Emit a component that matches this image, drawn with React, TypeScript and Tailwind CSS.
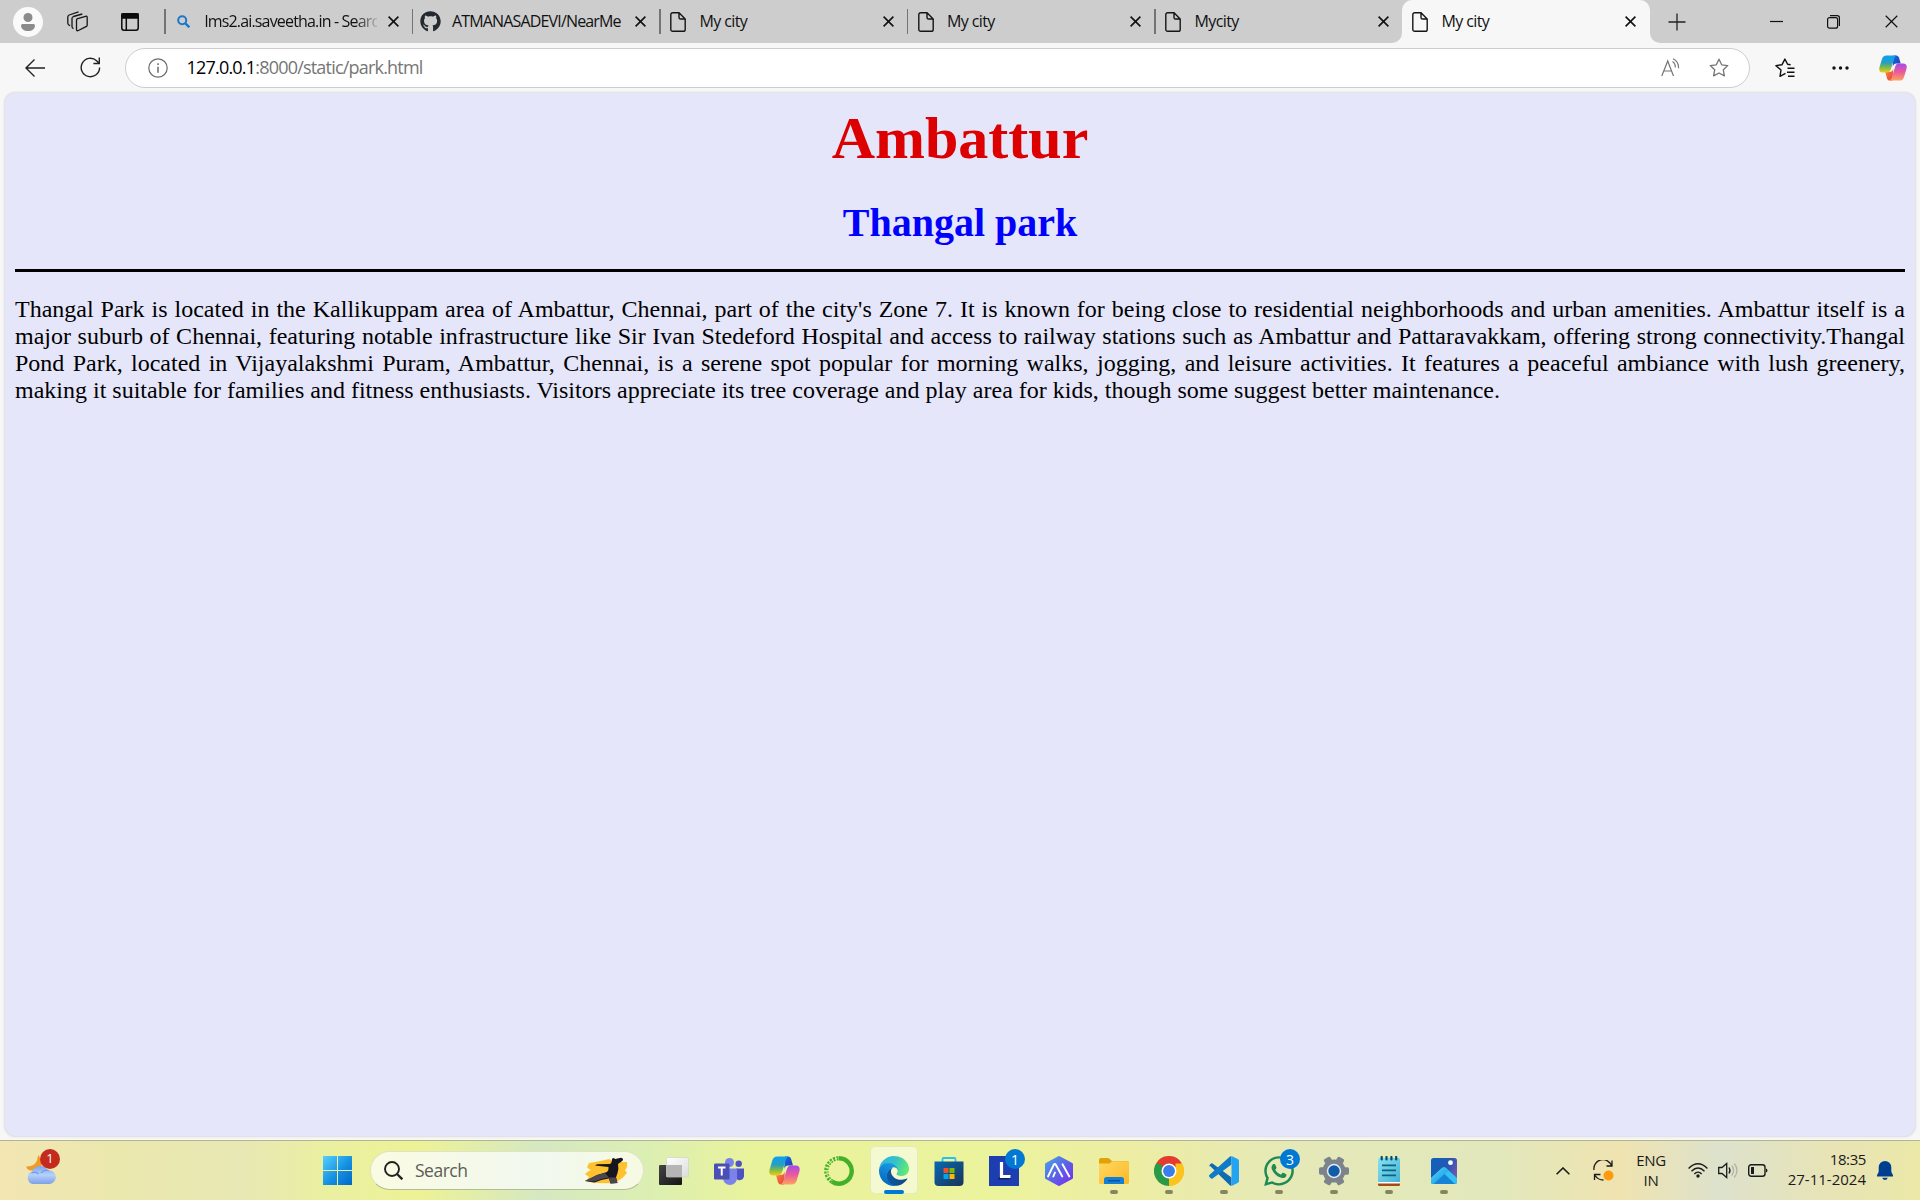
import React from 'react';
import { FaGithub, FaWhatsapp } from 'react-icons/fa';

const Close = ({ s = 11, w = 1.6 }: { s?: number; w?: number }) => (
  <svg width={s} height={s} viewBox="0 0 11 11" stroke="#111" strokeWidth={w} fill="none">
    <path d="M.6.6l9.8 9.8M10.4.6L.6 10.4" />
  </svg>
);

const Doc = () => (
  <svg width="16" height="20" viewBox="0 0 16 20" fill="none" stroke="#151515" strokeWidth="1.4">
    <path d="M2.7.8h6.3l6.2 6.2v10.4a1.9 1.9 0 0 1-1.9 1.9H2.7A1.9 1.9 0 0 1 .8 17.400V2.700A1.900 1.900 0 0 1 2.700.8zM9 .8v4.600a1.600 1.600 0 0 0 1.600 1.600h4.600" />
  </svg>
);

const Lens = () => (
  <svg width="13" height="13" viewBox="0 0 13 13" fill="none" stroke="#1a78cc" strokeWidth="2">
    <circle cx="5.200" cy="5.200" r="4" />
    <path d="M8 8l4.300 4.300" strokeWidth="2.400" />
  </svg>
);

function Copilot({ size }: { size: number }) {
  return (
    <svg width={size} height={size} viewBox="0 0 30 30">
      <defs>
        <linearGradient id="cpA" x1="0" y1="0" x2="0" y2="1">
          <stop offset="0.1" stopColor="#0fa0ea" />
          <stop offset="0.45" stopColor="#2a9fc0" />
          <stop offset="0.7" stopColor="#7cba4a" />
          <stop offset="1" stopColor="#f4cc13" />
        </linearGradient>
        <linearGradient id="cpB" x1="0" y1="0" x2="0" y2="1">
          <stop offset="0" stopColor="#a54bea" />
          <stop offset="0.5" stopColor="#ec5a9a" />
          <stop offset="1" stopColor="#fba45c" />
        </linearGradient>
        <linearGradient id="cpC" x1="0" y1="0" x2="1" y2="1">
          <stop offset="0" stopColor="#1d68dd" />
          <stop offset="1" stopColor="#1540b8" />
        </linearGradient>
        <linearGradient id="cpD" x1="0" y1="0" x2="1" y2="1">
          <stop offset="0" stopColor="#fb8a3c" />
          <stop offset="1" stopColor="#e6403e" />
        </linearGradient>
      </defs>
      <path d="M15.500 1.500h2.800c1.800 0 2.700 1 3.200 2.600l1.700 6.100h-4.600c-2.500 0-3.200 1.400-3.900 3.400z" fill="url(#cpC)" />
      <path d="M14.500 28.500h-2.800c-1.800 0-2.700-1-3.200-2.600l-1.700-6.600h4.600c2.500 0 3.200-1.400 3.900-3.400z" fill="url(#cpD)" />
      <path d="M8.200 1.500h11c-1.800.5-2.500 1.800-3.100 3.800L12.800 16c-.8 2.600-1.900 3.800-4.100 3.800H4.200C.6 19.800-.3 17.400.6 14L3.200 5.400C4 2.800 5.400 1.500 8.200 1.500z" fill="url(#cpA)" />
      <path d="M21.800 28.500h-11c1.800-.5 2.500-1.800 3.100-3.800L17.200 14c.8-2.600 1.900-3.800 4.100-3.800h4.500c3.600 0 4.500 2.400 3.600 5.800l-2.600 8.600c-.8 2.600-2.200 3.900-5 3.900z" fill="url(#cpB)" />
    </svg>
  );
}

const Edge = () => (
  <svg width="30" height="30" viewBox="0 0 256 256">
    <defs>
      <linearGradient id="edA" x1="0.2" y1="0" x2="1" y2="0.3">
        <stop offset="0" stopColor="#0c59a4" />
        <stop offset="1" stopColor="#114a8b" />
      </linearGradient>
      <linearGradient id="edB" x1="0.6" y1="0" x2="0.3" y2="1">
        <stop offset="0" stopColor="#1b9de2" />
        <stop offset="0.5" stopColor="#0f7fd2" />
        <stop offset="1" stopColor="#0067c0" />
      </linearGradient>
      <linearGradient id="edC" x1="0" y1="0.3" x2="1" y2="0.6">
        <stop offset="0" stopColor="#2fb4e8" />
        <stop offset="0.5" stopColor="#36c3c4" />
        <stop offset="1" stopColor="#66eb6e" />
      </linearGradient>
    </defs>
    <path fill="url(#edA)" d="M235.680 191.870c-3.360 1.870-6.860 3.470-10.460 4.790a101.100 101.100 0 0 1-35.530 6.330c-46.820 0-87.620-32.180-87.620-73.550.12-11.260 6.340-21.570 16.210-26.980-42.360 1.780-53.260 45.920-53.260 71.780 0 73.110 67.390 80.520 81.930 80.520 7.830 0 19.670-2.280 26.750-4.550l1.300-.42a128.100 128.100 0 0 0 66.550-52.650 4.050 4.050 0 0 0-5.870-5.270z" />
    <path fill="url(#edB)" d="M105.730 241.420a79.200 79.200 0 0 1-22.740-21.340 80.720 80.720 0 0 1 29.540-120.490c3.120-1.470 8.450-4.120 15.540-3.990a32.350 32.350 0 0 1 25.690 13.010 31.880 31.880 0 0 1 6.360 18.660c0-.21 24.460-79.580-80-79.580-43.900 0-80 41.660-80 78.210a130.150 130.150 0 0 0 12.110 56 128 128 0 0 0 156.380 67.110 75.550 75.550 0 0 1-62.780-8z" />
    <path fill="url(#edC)" d="M152.330 148.860c-.81 1.050-3.300 2.500-3.300 5.660 0 2.610 1.700 5.120 4.720 7.230 14.380 10 41.490 8.680 41.560 8.680a59.560 59.560 0 0 0 30.270-8.350 61.380 61.380 0 0 0 30.430-52.880c.26-22.410-8-37.310-11.340-43.910C223.460 23.840 177.720 0 128 0A128 128 0 0 0 0 126.200c.48-36.540 36.800-66.050 80-66.050 3.500 0 23.460.34 42 10.070 16.340 8.580 24.900 18.940 30.850 29.210 6.180 10.670 7.280 24.150 7.280 29.520s-2.740 13.330-7.800 19.910z" />
  </svg>
);

const TaskView = () => (
  <svg width="30" height="30" viewBox="0 0 30 30">
    <defs>
      <linearGradient id="tvA" x1="0" y1="0" x2="1" y2="1">
        <stop offset="0" stopColor="#444" />
        <stop offset="1" stopColor="#151515" />
      </linearGradient>
      <linearGradient id="tvB" x1="0" y1="0" x2="1" y2="1">
        <stop offset="0" stopColor="#fff" />
        <stop offset="1" stopColor="#dcdcdc" />
      </linearGradient>
    </defs>
    <rect x="0" y="9" width="23" height="20" rx="1" fill="url(#tvA)" />
    <rect x="7.500" y="1.500" width="22" height="19.500" rx="1" fill="url(#tvB)" stroke="#d0d4c4" strokeWidth=".7" />
    <path d="M7.500 9H23v12H7.500z" fill="#b5b5b5" />
  </svg>
);

const Teams = () => (
  <svg width="30" height="28" viewBox="0 0 30 28">
    <circle cx="24.700" cy="6.700" r="3.200" fill="#4f52c2" />
    <path d="M22 11.500h8v8a4.500 4.500 0 0 1-8 2z" fill="#4f52c2" />
    <circle cx="15.500" cy="5.500" r="4.500" fill="#7b83eb" />
    <path d="M9 11.500h14v9.500a7 7 0 0 1-14 0z" fill="#7b83eb" />
    <rect x="0" y="6.500" width="15.500" height="16" rx="1.200" fill="#4a4fb8" />
    <path d="M4 10.500h7.500M7.750 10.500v8" stroke="#fff" strokeWidth="2" />
  </svg>
);

const Ring = () => (
  <svg width="30" height="30" viewBox="0 0 30 30" fill="none">
    <path d="M15 2.300A12.700 12.700 0 1 1 8 25.600" stroke="#43b02a" strokeWidth="4.400" />
    <path d="M8 25.600A12.700 12.700 0 0 1 15 2.300" stroke="#43b02a" strokeWidth="4.200" strokeDasharray="2.100 1.200" />
    <path d="M7.500 24.500A12.400 12.400 0 0 1 14 2.500" stroke="#e9f29c" strokeWidth="1" strokeDasharray="2.500 1.800" />
  </svg>
);

const Store = () => (
  <svg width="30" height="30" viewBox="0 0 30 30">
    <defs>
      <linearGradient id="stA" x1="0" y1="0" x2="1" y2="1">
        <stop offset="0" stopColor="#0669b4" />
        <stop offset="1" stopColor="#1c3357" />
      </linearGradient>
    </defs>
    <path d="M8.500 7V3.200Q8.500 2 9.700 2h10.600q1.200 0 1.200 1.200V7" fill="none" stroke="#26c1f2" strokeWidth="1.800" />
    <path d="M.5 5.500h29V26a4 4 0 0 1-4 4h-21a4 4 0 0 1-4-4z" fill="url(#stA)" />
    <path d="M9.500 12h5v5h-5z" fill="#f25022" />
    <path d="M15.500 12h5v5h-5z" fill="#7fba00" />
    <path d="M9.500 18h5v5h-5z" fill="#00a4ef" />
    <path d="M15.500 18h5v5h-5z" fill="#ffb900" />
  </svg>
);

const LApp = () => (
  <svg width="30" height="30" viewBox="0 0 30 30">
    <path d="M0 0h30v30H0z" fill="#1d3eb0" />
    <path d="M8.500 23.500l3-3.500h10.500v2.500l-3 1z" fill="#0d2260" />
    <path d="M12.500 6v14.500h9" fill="none" stroke="#fff" strokeWidth="3.200" />
  </svg>
);

const Peaks = () => (
  <svg width="30" height="30" viewBox="0 0 30 30" fill="none">
    <defs>
      <linearGradient id="pkA" x1="0" y1="0" x2="1" y2="1">
        <stop offset="0" stopColor="#4aa3e6" />
        <stop offset="0.5" stopColor="#5b63e6" />
        <stop offset="1" stopColor="#7a2ff0" />
      </linearGradient>
    </defs>
    <path d="M15 1.500L27.500 8.300v13.400L15 28.500 2.500 21.700V8.300z" fill="url(#pkA)" stroke="url(#pkA)" strokeWidth="3" strokeLinejoin="round" />
    <path d="M4 20.500L9.600 9q1.200-2 2.400 0l6.300 11.500M11 16.500l-1.700 4M18.500 8.300l6.800 12.200" stroke="#fff" strokeWidth="1.900" strokeLinecap="round" />
  </svg>
);

const Folder = () => (
  <svg width="30" height="26" viewBox="0 0 30 26">
    <defs>
      <linearGradient id="foA" x1="0" y1="0" x2="1" y2="1">
        <stop offset="0" stopColor="#ffd860" />
        <stop offset="1" stopColor="#fbb928" />
      </linearGradient>
    </defs>
    <path d="M0 2Q0 0 2 0h7.500l3.500 3h15q2 0 2 2v5H0z" fill="#e2a106" />
    <path d="M0 5.500h10.500l2.500-2.300h15.500q1.500 0 1.500 1.500v19.800q0 1.500-1.500 1.500h-27Q0 26 0 24.500z" fill="url(#foA)" />
    <path d="M5 26v-4.500q0-2.500 2.500-2.500h15q2.500 0 2.500 2.500V26z" fill="#1180d4" />
    <path d="M9 22.700h12" stroke="#0a4f94" strokeWidth="1.300" />
  </svg>
);

const Chrome = () => (
  <svg width="30" height="30" viewBox="0 0 48 48">
    <path d="M24 24L3.200 12A24 24 0 0 1 44.800 12z" fill="#e33b2e" />
    <path d="M24 24L44.800 12A24 24 0 0 1 24 48z" fill="#fcc31e" />
    <path d="M24 24v24A24 24 0 0 1 3.200 12z" fill="#2a9a47" />
    <path d="M13.600 30L3.200 12l9 2 4 10z" fill="#2a9a47" />
    <path d="M34.400 18V12h10.400A24 24 0 0 1 24 48l10.400-18z" fill="#fcc31e" />
    <circle cx="24" cy="24" r="12" fill="#fff" />
    <circle cx="24" cy="24" r="9.500" fill="#3b7eea" />
  </svg>
);

const Code = () => (
  <svg width="30" height="30" viewBox="0 0 100 100">
    <path d="M1 31l6-6q2-2 5 0l63 47v25q-2 2-4 2z M1 37q-2-3 0-6z" fill="#0f6cb2" />
    <path d="M1 69l6 6q2 2 5 0l63-47V3q-2-2-4-2L1 63q-2 3 0 6z" fill="#0e7ac9" />
    <path d="M71 99q4 1 6 0l20-10q3-2 3-6V17q0-4-3-6L77 1q-3-1-6 0 4 0 4 4v90q0 4-4 4z" fill="#24a4f0" />
  </svg>
);

const Gear = () => (
  <svg width="30" height="30" viewBox="0 0 30 30">
    <g fill="#7d838b">
      <circle cx="15" cy="15" r="11.500" />
      {[0, 60, 120].map((a) => (
        <rect key={a} x="0" y="11.300" width="30" height="7.400" rx="1.600" transform={`rotate(${a} 15 15)`} />
      ))}
    </g>
    <circle cx="15" cy="15" r="7.200" fill="#e8ecf0" />
    <circle cx="15" cy="15" r="5.700" fill="#0f5ca8" />
  </svg>
);

const Notes = () => (
  <svg width="22" height="30" viewBox="0 0 22 30">
    <defs>
      <linearGradient id="noA" x1="0" y1="0" x2="1" y2="1">
        <stop offset="0" stopColor="#86e2f2" />
        <stop offset="1" stopColor="#44b2d4" />
      </linearGradient>
    </defs>
    <path d="M0 25h22v3.500q0 1.500-1.500 1.500h-19Q0 30 0 28.500z" fill="#a44a12" />
    <path d="M0 24h22v3.500H0z" fill="#fff" />
    <path d="M0 3.500Q0 2 1.500 2h19Q22 2 22 3.500V26H0z" fill="url(#noA)" />
    <path d="M4 9.300h14M4 14.300h14M4 19.300h14" stroke="#0b6482" strokeWidth="1.700" />
    <path d="M3.700 1v2.500M8.500 1v2.500M13.400 1v2.500M18.200 1v2.500" stroke="#0b4a66" strokeWidth="2.200" strokeLinecap="round" />
  </svg>
);

const Photos = () => (
  <svg width="26" height="26" viewBox="0 0 26 26">
    <defs>
      <linearGradient id="phA" x1="0" y1="0.300" x2="1" y2="0.700">
        <stop offset="0" stopColor="#0d62bd" />
        <stop offset="0.600" stopColor="#2b56b0" />
        <stop offset="1" stopColor="#7b55b5" />
      </linearGradient>
      <linearGradient id="phB" x1="0" y1="0" x2="1" y2="1">
        <stop offset="0" stopColor="#4fdcf8" />
        <stop offset="1" stopColor="#128be0" />
      </linearGradient>
    </defs>
    <rect width="26" height="26" rx="2.500" fill="url(#phA)" />
    <path d="M0 20L11 10q2-1.500 4 0l11 10v3.500q0 2.500-2.500 2.500h-21Q0 26 0 23.500z" fill="#33c1f1" />
    <path d="M2 26l11-10.500L24 26z" fill="#1583d8" />
    <path d="M0 20L11 10q2-1.500 4 0l2.500 2.500L2.500 26Q0 26 0 23.500z" fill="url(#phB)" />
    <circle cx="19.500" cy="4.700" r="2.400" fill="#fff" />
  </svg>
);

const Weather = () => (
  <svg width="30" height="29" viewBox="0 0 30 29">
    <defs>
      <linearGradient id="weA" x1="0" y1="0" x2="0" y2="1">
        <stop offset="0" stopColor="#7ea4ee" />
        <stop offset="0.500" stopColor="#b4d2fb" />
        <stop offset="1" stopColor="#7d9fe6" />
      </linearGradient>
    </defs>
    <path d="M12 0c2 2 4 6 4 10l-6 5.500H4C2 14.500.5 13.500 0 11.500c7 .5 11.500-3 12-11.500z" fill="#f29a25" />
    <path d="M7 29a6.500 6.500 0 0 1-1-12.500A9 9 0 0 1 22 15.500a6.800 6.800 0 0 1 2 13.500z" fill="url(#weA)" />
    <path d="M5.500 18q4-2 7 1M15 18q3-4 8-2.500" fill="none" stroke="#7799e6" strokeWidth="1.200" />
  </svg>
);

const Dancer = () => (
  <svg width="44" height="28" viewBox="0 0 44 28">
    <path d="M5 6Q18 4 25 2l5 3 13 0q1 5-2 8l2 3q-4 5-9 8l-8 2Q10 27 2 24l3-4-4-3q3-3 6-4-3-1-4-3z" fill="#ffc22e" />
    <path d="M28 2q1.500-1.800 3 0l6-1.200q3 .7 1.500 3l-4.500 3.200q1 5-.5 9l-1.500 4.500 1.500 5.500-7 .6q-1-3-1.500-5-8 1-14.500 4L1 24q6-3 12-6l10-3q2-2 1.500-5L11 8.500l2-1.200 13-.3q2-1 2-5z" fill="#17151f" />
    <path d="M25 20.500q-8 1-14.500 4L1 24q6-3 12-6l8-2M25 20.500l7 0 1.500 5.500-7 .6z" fill="#4b4552" />
  </svg>
);

const Windows = () => (
  <svg width="29" height="29" viewBox="0 0 29 29">
    <defs>
      <linearGradient id="wiA" x1="0" y1="0" x2="29" y2="29" gradientUnits="userSpaceOnUse">
        <stop offset="0" stopColor="#57d0fc" />
        <stop offset="0.550" stopColor="#1590e2" />
        <stop offset="1" stopColor="#0068c8" />
      </linearGradient>
    </defs>
    <path d="M0 0h14v14H0zM15 0h14v14H15zM0 15h14v14H0zM15 15h14v14H15z" fill="url(#wiA)" />
  </svg>
);

type TabProps = { title: string; icon: React.ReactNode; active?: boolean; look?: string };

function Tab({ title, icon, active, look }: TabProps) {
  return (
    <div className="flex h-[43px] w-[247.5px] shrink-0 items-center">
      {!active && <div className="h-[25px] w-[1.5px] shrink-0 bg-[#747474]" />}
      <div className={active ? 'flex w-[36px] shrink-0 justify-center' : 'flex w-[35px] shrink-0 justify-center'}>{icon}</div>
      <div className={`mb-[2px] ml-[4px] w-[172px] overflow-hidden whitespace-nowrap text-[16px] text-[#111] ${look ?? 'tracking-[-0.6px]'}`}>{title}</div>
      <div className="ml-[11px] flex shrink-0">
        <Close />
      </div>
    </div>
  );
}

type AppProps = { children: React.ReactNode; running?: boolean; current?: boolean; badge?: string };

function TaskApp({ children, running, current, badge }: AppProps) {
  return (
    <div className="relative flex h-[59px] w-[55px] shrink-0 items-center justify-center">
      {current && <div className="absolute left-[3.500px] top-[5px] h-[48px] w-[48px] rounded-[5px] border border-[#e6ebbf] bg-[#f5f9d0]" />}
      <div className="relative">{children}</div>
      {running && <div className="absolute left-[23.500px] top-[49px] h-[4px] w-[8px] rounded-full bg-[#85865f]" />}
      {current && <div className="absolute left-[17.500px] top-[49px] h-[4px] w-[20px] rounded-full bg-[#0078d4]" />}
      {badge && (
        <div className="absolute left-[28.500px] top-[8px] flex h-[20px] w-[20px] items-center justify-center rounded-full bg-[#0078d4] text-[14px] text-white">
          {badge}
        </div>
      )}
    </div>
  );
}

const star = 'M10 1.200l2.700 5.600 6.100.8-4.500 4.200 1.100 6.100L10 15l-5.400 2.900 1.100-6.100L1.200 7.600l6.100-.8z';

export default function App() {
  return (
    <div className="flex h-[1200px] w-[1920px] flex-col overflow-hidden bg-[#f7f7f7] font-['Open_Sans',sans-serif]">
      <div className="flex h-[43px] shrink-0 bg-[#cdcdcd]">
        <div className="flex w-[164px] shrink-0 items-center">
          <div className="ml-[13px] flex h-[30px] w-[30px] items-center justify-center rounded-full bg-[#fafafa]">
            <svg width="14" height="18" viewBox="0 0 14 18" fill="#8b8b8b">
              <circle cx="7" cy="4.500" r="4.500" />
              <path d="M1.500 11h11q1.500 0 1.500 1.500C14 16 11 18 7 18s-7-2-7-5.500Q0 11 1.500 11z" />
            </svg>
          </div>
          <svg className="ml-[24px]" width="21" height="21" viewBox="0 0 21 21" fill="none" stroke="#151515" strokeWidth="1.300" strokeLinejoin="round">
            <path d="M9.500 9.200q0-1.200 1.200-1.600l7.800-2.300q1.700-.4 1.700 1.200v7.400q0 1.200-1.200 1.700l-7.600 3.900q-1.900.8-1.900-1z" />
            <path d="M6.500 17.500q-1.500-.3-1.500-2V7.500Q5 6 6.500 5.500L15.300 3M3.200 14.500Q1 14.300.8 12.300V6Q.8 4.500 2.200 4L11.500.9" />
          </svg>
          <svg className="ml-[33px]" width="18" height="18" viewBox="0 0 18 18" fill="none" stroke="#0b0b0b" strokeWidth="1.500">
            <rect x=".8" y=".8" width="16.400" height="16.400" rx="2.200" />
            <path d="M1 1h16v4H1z" fill="#0b0b0b" />
            <path d="M5.300 5v12" />
          </svg>
        </div>
        <Tab
          title="lms2.ai.saveetha.in - Searc"
          look="tracking-[-0.83px] [mask-image:linear-gradient(to_right,black_150px,transparent_176px)]"
          icon={<Lens />}
        />
        <Tab title="ATMANASADEVI/NearMe" look="tracking-[-0.84px]" icon={<FaGithub size={21} color="#24292f" />} />
        <Tab title="My city" icon={<Doc />} />
        <Tab title="My city" icon={<Doc />} />
        <Tab title="Mycity" icon={<Doc />} />
        <div className="-ml-[10px] flex shrink-0">
          <div className="h-[43px] w-[10px] bg-[#f7f7f7]">
            <div className="h-full w-full rounded-br-[10px] bg-[#cdcdcd]" />
          </div>
          <div className="w-[248px] rounded-t-[10px] bg-[#f7f7f7]">
            <Tab title="My city" active icon={<Doc />} />
          </div>
          <div className="h-[43px] w-[10px] bg-[#f7f7f7]">
            <div className="h-full w-full rounded-bl-[10px] bg-[#cdcdcd]" />
          </div>
        </div>
        <div className="flex flex-1 items-center">
          <svg className="ml-[8px]" width="18" height="18" viewBox="0 0 18 18" stroke="#222" strokeWidth="1.300">
            <path d="M9 .5v17M.5 9h17" />
          </svg>
          <svg className="ml-[84px]" width="13" height="13" viewBox="0 0 13 13" stroke="#111" strokeWidth="1.200">
            <path d="M0 6.500h13" />
          </svg>
          <svg className="ml-[44px]" width="13" height="14" viewBox="0 0 13 14" fill="none" stroke="#111" strokeWidth="1.200">
            <rect x=".6" y="2.600" width="10" height="10.600" rx="2" />
            <path d="M3 .7h7.200q2.200 0 2.200 2.200V11" />
          </svg>
          <div className="ml-[45px]">
            <Close s={13} w={1} />
          </div>
        </div>
      </div>

      <div className="flex h-[50px] shrink-0 items-center pb-[1px]">
        <svg className="ml-[25px]" width="20" height="18" viewBox="0 0 20 18" fill="none" stroke="#222" strokeWidth="1.400">
          <path d="M20 9H1M9.500.6L1 9l8.500 8.400" />
        </svg>
        <svg className="ml-[35px]" width="21" height="21" viewBox="0 0 21 21" fill="none" stroke="#222" strokeWidth="1.400">
          <path d="M19.600 10.500a9.200 9.200 0 1 1-3-6.800L19 6.200M19.300.5v6H13.400" />
        </svg>
        <div className="ml-[24px] flex h-[40px] w-[1625px] items-center rounded-full border border-[#cdcdcd] bg-white">
          <svg className="ml-[21.500px]" width="20" height="20" viewBox="0 0 20 20" fill="none" stroke="#6b6b6b" strokeWidth="1.200">
            <circle cx="10" cy="10" r="9.200" />
            <path d="M10 8.700v6M10 5.200v1.700" strokeWidth="1.500" />
          </svg>
          <div className="ml-[19px] text-[18px] tracking-[-0.8px] text-[#767676]">
            <span className="text-black">127.0.0.1</span>:8000/static/park.html
          </div>
          <svg className="ml-auto" width="19" height="19" viewBox="0 0 19 19" fill="none" stroke="#757575" strokeWidth="1.200">
            <path d="M.8 18L6.700 3l5.800 15M2.700 13h8M11.500 3.500q3 2 2.800 6M12 .8q5.800 2.700 5.600 9.500" />
          </svg>
          <svg className="ml-[29px] mr-[20px]" width="20" height="20" viewBox="0 0 20 20" fill="none" stroke="#757575" strokeWidth="1.300" strokeLinejoin="round">
            <path d={star} />
          </svg>
        </div>
        <svg className="ml-[25px]" width="20" height="20" viewBox="0 0 20 20" fill="none" stroke="#111" strokeWidth="1.400" strokeLinejoin="round">
          <path d="M10.500 15.300L5 18.300l1-6.300L.9 7.600l6-.8 3-5.700 2.700 5.200 3 .4M12.500 10.200h7M12 14.300h7.500M13 18.200h6.500" />
        </svg>
        <svg className="ml-[37px]" width="17" height="4" viewBox="0 0 17 4" fill="#111">
          <circle cx="2" cy="2" r="1.700" />
          <circle cx="8.500" cy="2" r="1.700" />
          <circle cx="15" cy="2" r="1.700" />
        </svg>
        <div className="ml-[30px]">
          <Copilot size={28} />
        </div>
      </div>

      <div className="ml-[5px] h-[1043px] w-[1910px] shrink-0 rounded-[11px] bg-[#e5e6fa] px-[10px] font-['Liberation_Serif',serif] text-black shadow-[0_0_2px_0.500px_#dcdcdc]">
        <h1 className="pt-[11px] text-center text-[60px] font-bold leading-[69px] text-[#dc0000]">Ambattur</h1>
        <h2 className="mt-[27px] text-center text-[40px] font-bold leading-[46px] text-[#0000ff]">Thangal park</h2>
        <hr className="mt-[23px] h-[3px] border-0 bg-black" />
        <div className="mt-[24px] whitespace-nowrap text-justify text-[24px] leading-[27px]">
          <div className="[text-align-last:justify]">Thangal Park is located in the Kallikuppam area of Ambattur, Chennai, part of the city's Zone 7. It is known for being close to residential neighborhoods and urban amenities. Ambattur itself is a</div>
          <div className="[text-align-last:justify]">major suburb of Chennai, featuring notable infrastructure like Sir Ivan Stedeford Hospital and access to railway stations such as Ambattur and Pattaravakkam, offering strong connectivity.Thangal</div>
          <div className="[text-align-last:justify]">Pond Park, located in Vijayalakshmi Puram, Ambattur, Chennai, is a serene spot popular for morning walks, jogging, and leisure activities. It features a peaceful ambiance with lush greenery,</div>
          <div>making it suitable for families and fitness enthusiasts. Visitors appreciate its tree coverage and play area for kids, though some suggest better maintenance.</div>
        </div>
      </div>

      <div className="mt-auto flex h-[60px] shrink-0 items-center border-t border-[#b2b594] bg-[linear-gradient(90deg,#f3e6b4_0px,#ebe8ad_110px,#e8e8b4_240px,#eaf0a0_330px,#edf296_420px,#d5e8c2_540px,#dcefb2_650px,#e9f39c_750px,#ebf39c_1000px,#ededa4_1130px,#e5e9b8_1300px,#e2e8bc_1500px,#efe3b0_1620px,#dde2cc_1720px,#e8e4b6_1830px,#ebe8a8_1920px)]">
        <div className="relative flex h-[59px] w-[323px] shrink-0">
          <div className="ml-[26px] mt-[14px]">
            <Weather />
          </div>
          <div className="absolute left-[40px] top-[8px] flex h-[20px] w-[20px] items-center justify-center rounded-full bg-[#c42b1c] text-[13px] text-white">1</div>
        </div>
        <Windows />
        <div className="ml-[17.500px] flex h-[39px] w-[274px] shrink-0 items-center rounded-full border border-b-[#b4bd90] border-l-[#dfe4c0] border-r-[#dfe4c0] border-t-[#dfe4c0] bg-[linear-gradient(90deg,#fafbe3,#f1f8ee_60%,#f6fae4)]">
          <svg className="ml-[13px]" width="19" height="19" viewBox="0 0 19 19" fill="none" stroke="#222" strokeWidth="1.900">
            <circle cx="8" cy="8" r="7" />
            <path d="M13 13l5.300 5.300" strokeWidth="2.300" />
          </svg>
          <div className="ml-[12.500px] text-[17.500px] tracking-[-0.5px] text-[#5c5d57]">Search</div>
          <div className="ml-auto mr-[15px]">
            <Dancer />
          </div>
        </div>
        <div className="ml-[3px] flex">
          <TaskApp><TaskView /></TaskApp>
          <TaskApp><Teams /></TaskApp>
          <TaskApp><Copilot size={31} /></TaskApp>
          <TaskApp><Ring /></TaskApp>
          <TaskApp current><Edge /></TaskApp>
          <TaskApp><Store /></TaskApp>
          <TaskApp badge="1"><LApp /></TaskApp>
          <TaskApp><Peaks /></TaskApp>
          <TaskApp running><Folder /></TaskApp>
          <TaskApp running><Chrome /></TaskApp>
          <TaskApp running><Code /></TaskApp>
          <TaskApp running badge="3"><FaWhatsapp size={34} color="#1d8b52" /></TaskApp>
          <TaskApp running><Gear /></TaskApp>
          <TaskApp running><Notes /></TaskApp>
          <TaskApp running><Photos /></TaskApp>
        </div>
        <div className="ml-[84.500px] flex items-center text-[#1b1b1b]">
          <svg width="14" height="8" viewBox="0 0 14 8" fill="none" stroke="#1b1b1b" strokeWidth="1.600">
            <path d="M.6 7.300L7 1l6.400 6.300" />
          </svg>
          <svg className="ml-[23px]" width="21" height="21" viewBox="0 0 21 21" fill="none" stroke="#1b1b1b" strokeWidth="1.300">
            <path d="M1 10A9 9 0 0 1 18.500 6M19 .5V6h-5.500M1.500 20v-5.500h6M2 15.500Q5 20 10.500 20" />
            <circle cx="15.500" cy="15.500" r="5" fill="#ff9a0c" stroke="none" />
          </svg>
          <div className="mb-[2px] ml-[21px] w-[32px] text-center text-[15px] leading-[20px] tracking-[-0.3px]">ENG<br />IN</div>
          <svg className="ml-[21px]" width="20" height="15" viewBox="0 0 20 15" fill="none" stroke="#1b1b1b" strokeWidth="1.400">
            <path d="M.6 5.500q9.400-9.300 18.800 0M3.500 8.300q6.500-6.400 13 0M6.300 11q3.700-3.800 7.400 0" />
            <circle cx="10" cy="13" r="1.700" fill="#1b1b1b" stroke="none" />
          </svg>
          <svg className="ml-[10px]" width="20" height="17" viewBox="0 0 20 17" fill="none" stroke="#1b1b1b" strokeWidth="1.300">
            <path d="M.7 5.500h3.300L8.700 1.500v14L4 11.500H.7z" />
            <path d="M11 5.500q2 3 0 6" />
            <path d="M13.700 3.500q3.800 5 0 10M16.300 1.500q5.400 7 0 14" stroke="#b2b5a4" />
          </svg>
          <svg className="ml-[10px]" width="20" height="13" viewBox="0 0 20 13" fill="none" stroke="#1b1b1b" strokeWidth="1.400">
            <rect x=".7" y=".7" width="16.300" height="11.600" rx="2.500" />
            <path d="M3 3.500Q3 3 3.500 3H6v7H3.500Q3 10 3 9.500zM18 4.500q1.500.3 1.500 2t-1.500 2z" fill="#1b1b1b" stroke="none" />
          </svg>
          <div className="mb-[4px] ml-[18px] w-[80px] whitespace-nowrap text-right text-[15px] leading-[20px]">
            <span className="tracking-[-0.4px]">18:35</span>
            <br />27-11-2024
          </div>
          <svg className="ml-[11px]" width="16" height="19" viewBox="0 0 16 19" fill="#003e92">
            <path d="M8 0a6.300 6.300 0 0 1 6.300 6.300v4.500l1.700 3.500v1.200H0v-1.200l1.700-3.500V6.300A6.300 6.300 0 0 1 8 0zM5.200 16.700h5.600Q10 19 8 19t-2.800-2.300z" />
          </svg>
        </div>
      </div>
    </div>
  );
}
